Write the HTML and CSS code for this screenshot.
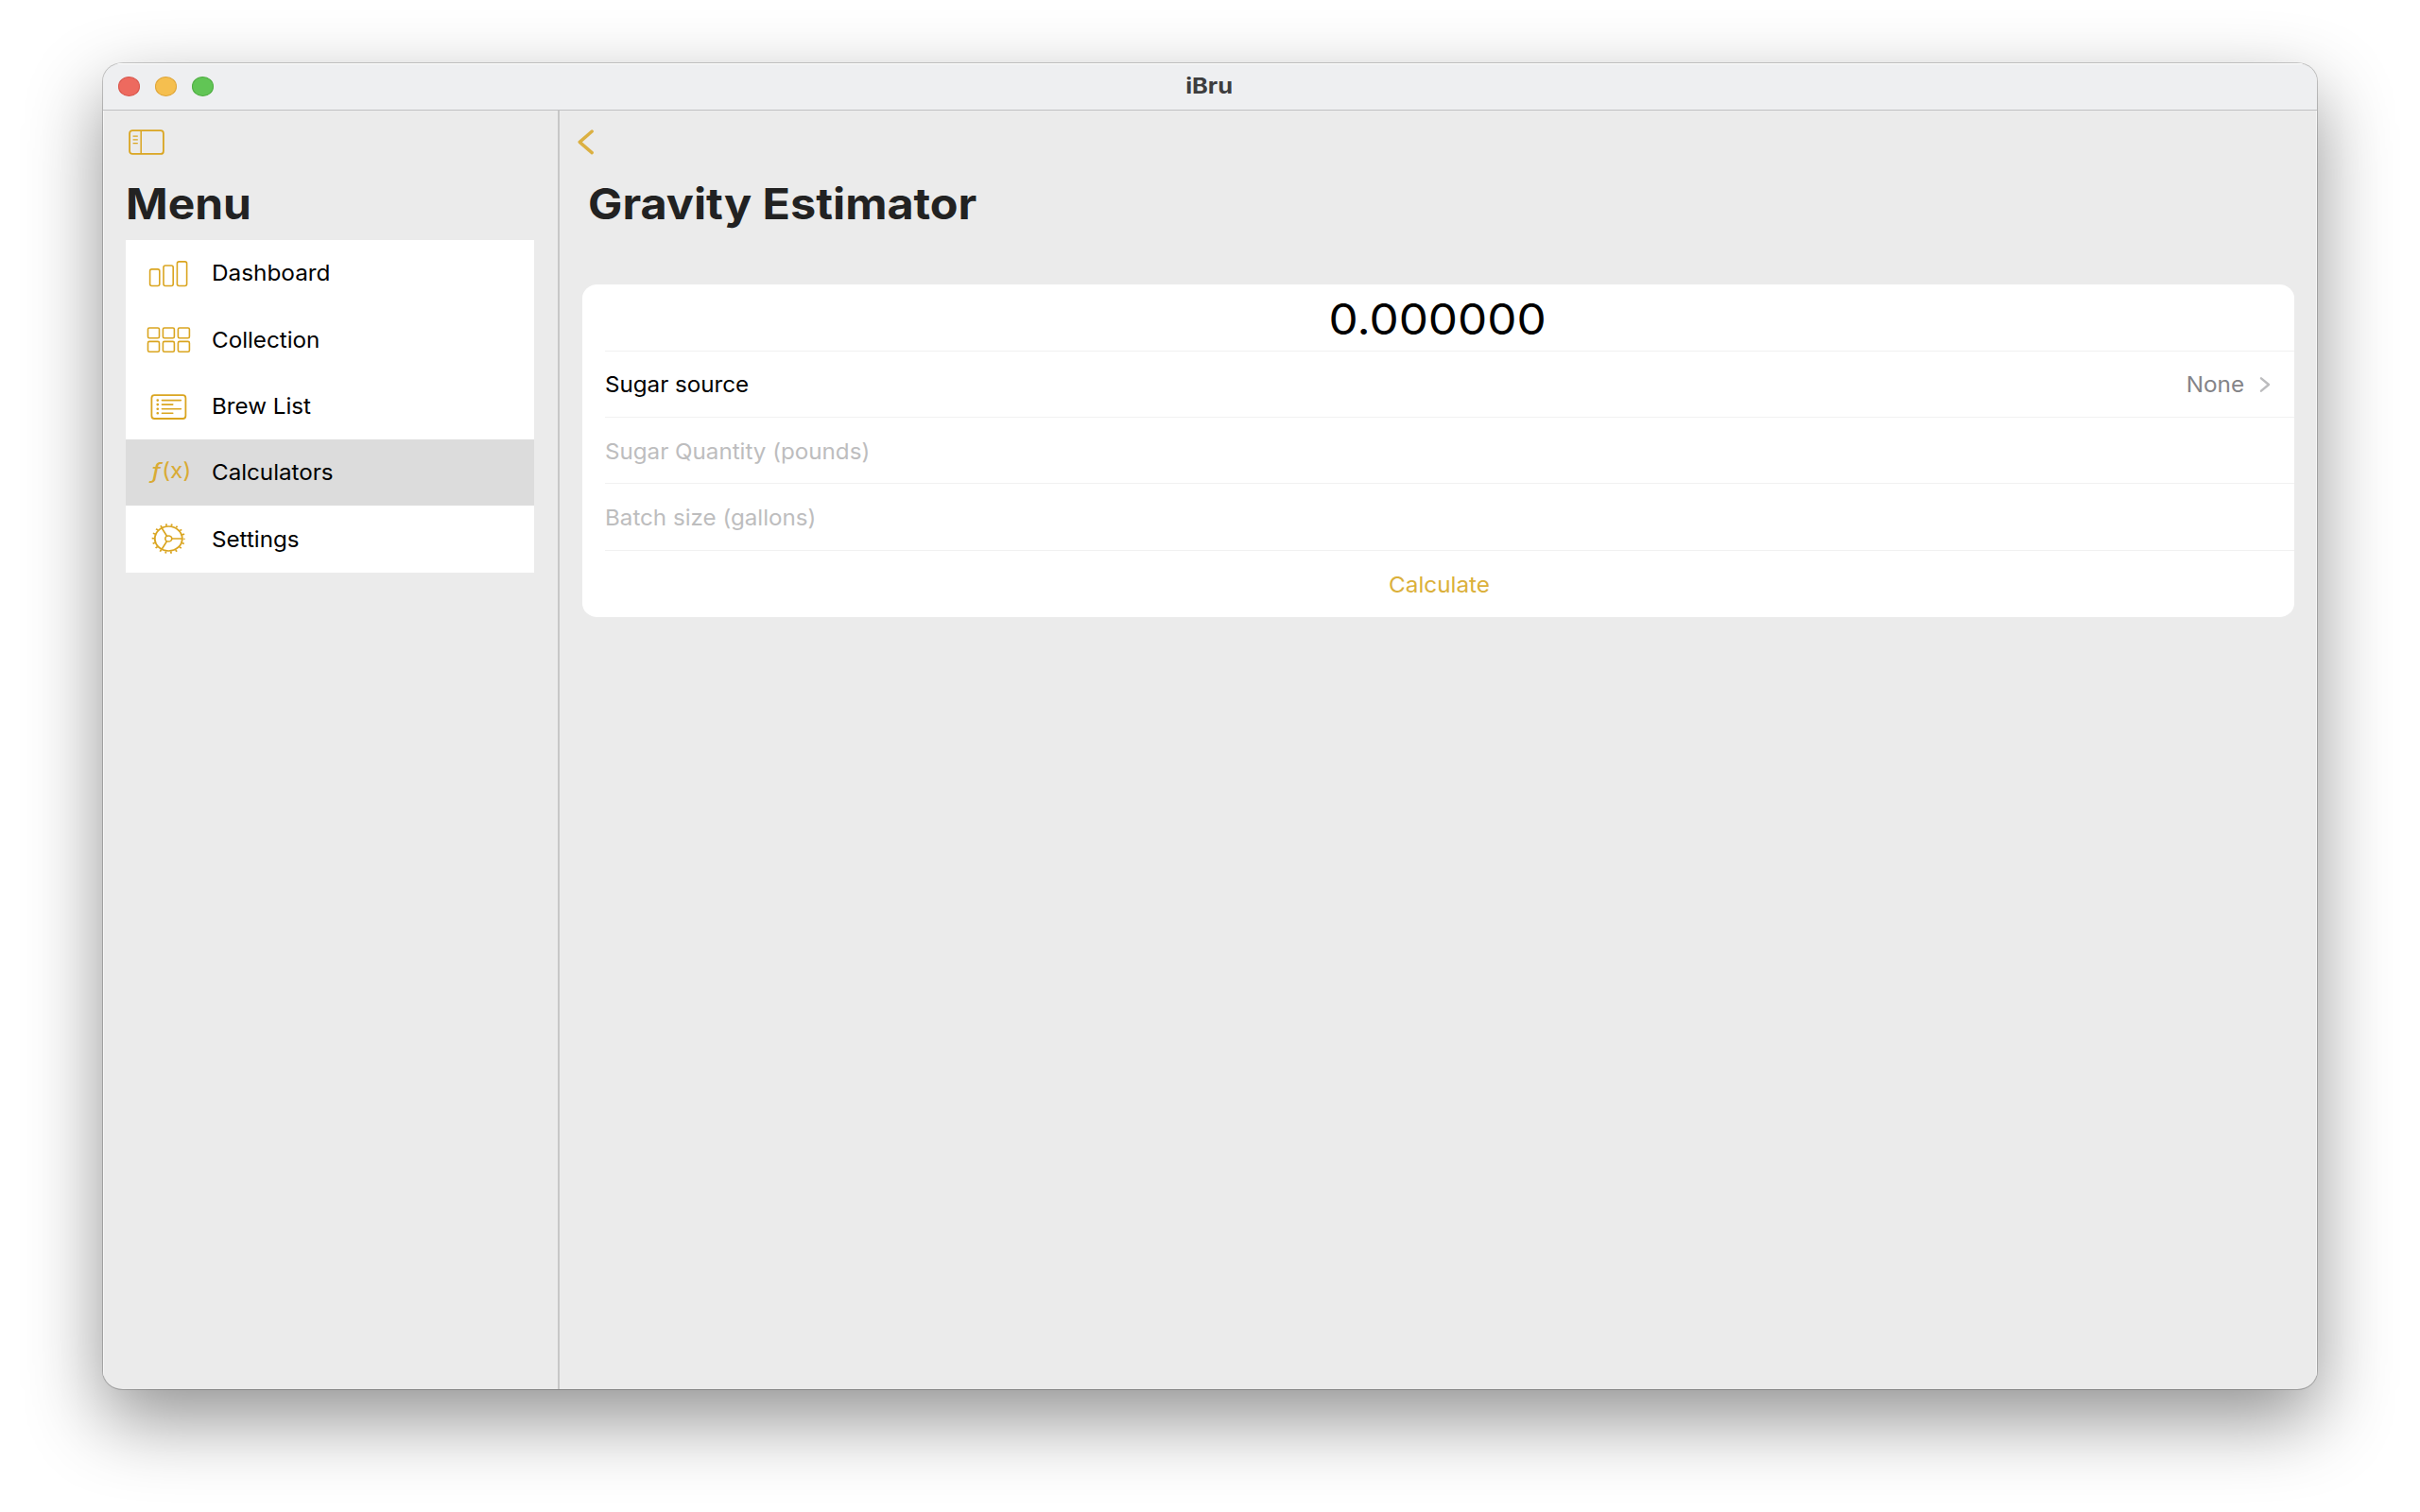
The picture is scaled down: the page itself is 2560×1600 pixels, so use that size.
FILE: index.html
```html
<!DOCTYPE html>
<html lang="en">
<head>
<meta charset="utf-8">
<title>iBru</title>
<link rel="stylesheet" href="styles.css">
</head>
<body>
<div class="window">
  <header class="titlebar">
    <div class="lights"><i class="light red"></i><i class="light amber"></i><i class="light green"></i></div>
    <h1 class="app-name"><span>iBru</span></h1>
  </header>
  <div class="columns">
    <aside class="sidebar">
      <svg class="toggle" viewBox="0 0 38 28" width="38" height="28" fill="none" stroke="#daa520">
        <rect x="1.1" y="1.1" width="35.8" height="24.8" rx="3" stroke-width="1.8"/>
        <path d="M13.2 1.3V25.9" stroke-width="1.5"/>
        <path d="M4.6 7.2h5.2M4.6 10.9h5.2M4.6 14.6h5.2" stroke-width="1.3"/>
      </svg>
      <h2 class="heading"><span class="head-menu">Menu</span></h2>
      <nav class="menu">
        <a class="item">
          <svg class="icon" viewBox="0 0 48 36"><rect x="4.6" y="13.9" width="10.2" height="17.6" rx="2"/><rect x="19" y="10" width="10.2" height="21.5" rx="2"/><rect x="33.4" y="5.9" width="10.2" height="25.6" rx="2"/></svg>
          <span class="label dashboard">Dashboard</span>
        </a>
        <a class="item">
          <svg class="icon" viewBox="0 0 48 36"><rect x="2.5" y="6" width="12" height="10.8" rx="1.5"/><rect x="18.4" y="6" width="12" height="10.8" rx="1.5"/><rect x="34.4" y="6" width="12" height="10.8" rx="1.5"/><rect x="2.5" y="20.4" width="12" height="10.8" rx="1.5"/><rect x="18.4" y="20.4" width="12" height="10.8" rx="1.5"/><rect x="34.4" y="20.4" width="12" height="10.8" rx="1.5"/></svg>
          <span class="label">Collection</span>
        </a>
        <a class="item">
          <svg class="icon" viewBox="0 0 48 36"><rect x="6.4" y="6.2" width="36" height="24.8" rx="3" stroke-width="1.8"/><path d="M17.4 11.6h20M17.4 16.1h11.4M17.4 20.7h20M17.4 25.3h11.4" stroke-linecap="round"/><path d="M12.7 11.6h.1M12.7 16.1h.1M12.7 20.7h.1M12.7 25.3h.1" stroke-width="2.6" stroke-linecap="round"/></svg>
          <span class="label">Brew List</span>
        </a>
        <a class="item selected">
          <svg class="icon" viewBox="0 0 48 36"><g class="formula"><text class="fn" transform="translate(5.6 24) scale(1.25 1)">ƒ</text><text transform="translate(17.2 24.4) scale(1.06 1)">(x)</text></g></svg>
          <span class="label">Calculators</span>
        </a>
        <a class="item">
          <svg class="icon" viewBox="0 0 48 36"><g transform="translate(24.3 18) scale(1.115 1)"><circle r="13" stroke-width="1.7"/><circle r="14.7" stroke-width="2.2" stroke-dasharray="1.6 3.531" stroke-dashoffset=".8"/><circle r="3.1" stroke-width="1.5"/><path d="M3.1 0H13M-1.55 -2.7L-6.5 -11.3M-1.55 2.7L-6.5 11.3" stroke-width="1.6"/></g></svg>
          <span class="label">Settings</span>
        </a>
      </nav>
    </aside>
    <main class="detail">
      <svg class="back" viewBox="0 0 18 28" width="18" height="28"><path d="M15.2 2L2.2 13.4L15.2 24.6" fill="none" stroke="#dbb042" stroke-width="3.4" stroke-linecap="round" stroke-linejoin="round"/></svg>
      <h2 class="heading"><span class="head-detail">Gravity Estimator</span></h2>
      <section class="card">
        <div class="row result"><span>0.000000</span></div>
        <div class="row"><span class="label">Sugar source</span>
          <span class="value">None</span>
          <svg class="chevron" viewBox="0 0 12 18" width="12" height="18"><path d="M2 2.3L10 9L2 15.7" fill="none" stroke="#bcbcbe" stroke-width="2.4" stroke-linecap="round" stroke-linejoin="round"/></svg>
        </div>
        <div class="row"><span class="label placeholder">Sugar Quantity (pounds)</span></div>
        <div class="row"><span class="label placeholder">Batch size (gallons)</span></div>
        <div class="row action"><span>Calculate</span></div>
      </section>
    </main>
  </div>
</div>
</body>
</html>
```
FILE: styles.css
```css
* { box-sizing: border-box; }

html, body { margin: 0; height: 100%; }

body {
  padding: 67px 109px 130px;
  background: #fff;
  color: #000;
  font-family: Inter, "Liberation Sans", sans-serif;
  font-size: 23.4px;
  line-height: 1.2;
  overflow: hidden;
}

h1, h2 { margin: 0; }
span { white-space: nowrap; }

.window {
  display: flex;
  flex-direction: column;
  width: 2342px;
  height: 1402.5px;
  border-radius: 21px / 19px;
  overflow: hidden;
  background: #ebebeb;
  box-shadow: 0 0 0 1px rgba(0, 0, 0, .2), 0 32px 80px rgba(0, 0, 0, .43);
}

.titlebar {
  display: grid;
  grid-template-columns: 1fr auto 1fr;
  align-items: center;
  flex: none;
  height: 50px;
  padding: 0 0 2px 16px;
  background: #eeeff1;
  border-top: 1px solid #fff;
  border-bottom: 1px solid #c0c1c2;
}

.lights { display: flex; gap: 15.7px; }
.light { width: 23.3px; height: 21px; border-radius: 50%; border: 1px solid; }
.red { background: #ed6a5f; border-color: #d9574d; }
.amber { background: #f5bf4f; border-color: #dfa63a; }
.green { background: #61c555; border-color: #4fae42; }

.app-name { font-size: 22.5px; font-weight: 700; color: #3d3d3e; margin: 0 17px 2px 0; }
.app-name span { display: block; transform: scaleX(1.13); }

.columns { display: flex; flex: 1; }

.sidebar {
  flex: none;
  width: 483px;
  padding: 20px 25px 0 24px;
  border-right: 2px solid #c7c7c7;
  box-shadow: inset 1px 0 #f7f7f7;
}

.toggle { display: block; margin-left: 3px; }

.heading {
  height: 54px;
  margin-top: 23.5px;
  font-size: 45.4px;
  line-height: 54px;
  font-weight: 700;
  color: #222;
}
.heading span, .label { display: inline-block; transform-origin: left center; }
.head-menu { transform: scaleX(1.056); }
.head-detail { transform: scaleX(1.0687); }

.menu { margin-top: 11px; background: #fff; }

.item {
  display: flex;
  align-items: center;
  height: 70.45px;
  padding-left: 21px;
  gap: 21.5px;
}
.item.selected { background: #dcdcdc; }

.icon {
  width: 48px;
  height: 36px;
  fill: none;
  stroke: #daa520;
  stroke-width: 1.6;
  overflow: visible;
}
.formula { fill: #d9ab35; stroke: none; font-size: 23px; }
.fn { font-style: italic; }

.item .label { padding-top: 1px; }
.label { transform: scaleX(1.033); }
.dashboard { transform: scaleX(1.04); }

.detail { flex: 1; padding: 20px 24px 0; box-shadow: inset -1px 0 #f7f7f7; }
.back { display: block; margin-left: -5px; }
.detail .heading { padding-left: 6px; }

.card {
  margin-top: 58px;
  border-radius: 16px / 14.5px;
  background: #fff;
  overflow: hidden;
}

.row {
  display: flex;
  align-items: center;
  height: 70.5px;
  margin-left: 24px;
  padding: 3px 25px 0 0;
  border-bottom: 1.5px solid #f1f1f1;
}
.row:last-child { border-bottom: 0; }

.result, .action { justify-content: center; margin-left: 0; padding: 2px 23px 0 25px; position: relative; }
.result { border-bottom: 0; font-size: 45.4px; padding: 4px 25px 0 24px; }
.result span { transform: scaleX(1.09); }
.result::after { content: ""; position: absolute; left: 24px; right: 0; bottom: -1px; height: 1px; background: #f1f1f1; }
.action { color: #dbb03a; }
.action span { transform: scaleX(1.0385); }

.value { margin-left: auto; margin-right: 16px; color: #848488; transform: scaleX(1.04); transform-origin: right center; }
.chevron { flex: none; }
.placeholder { color: #bdbdbe; }
```
